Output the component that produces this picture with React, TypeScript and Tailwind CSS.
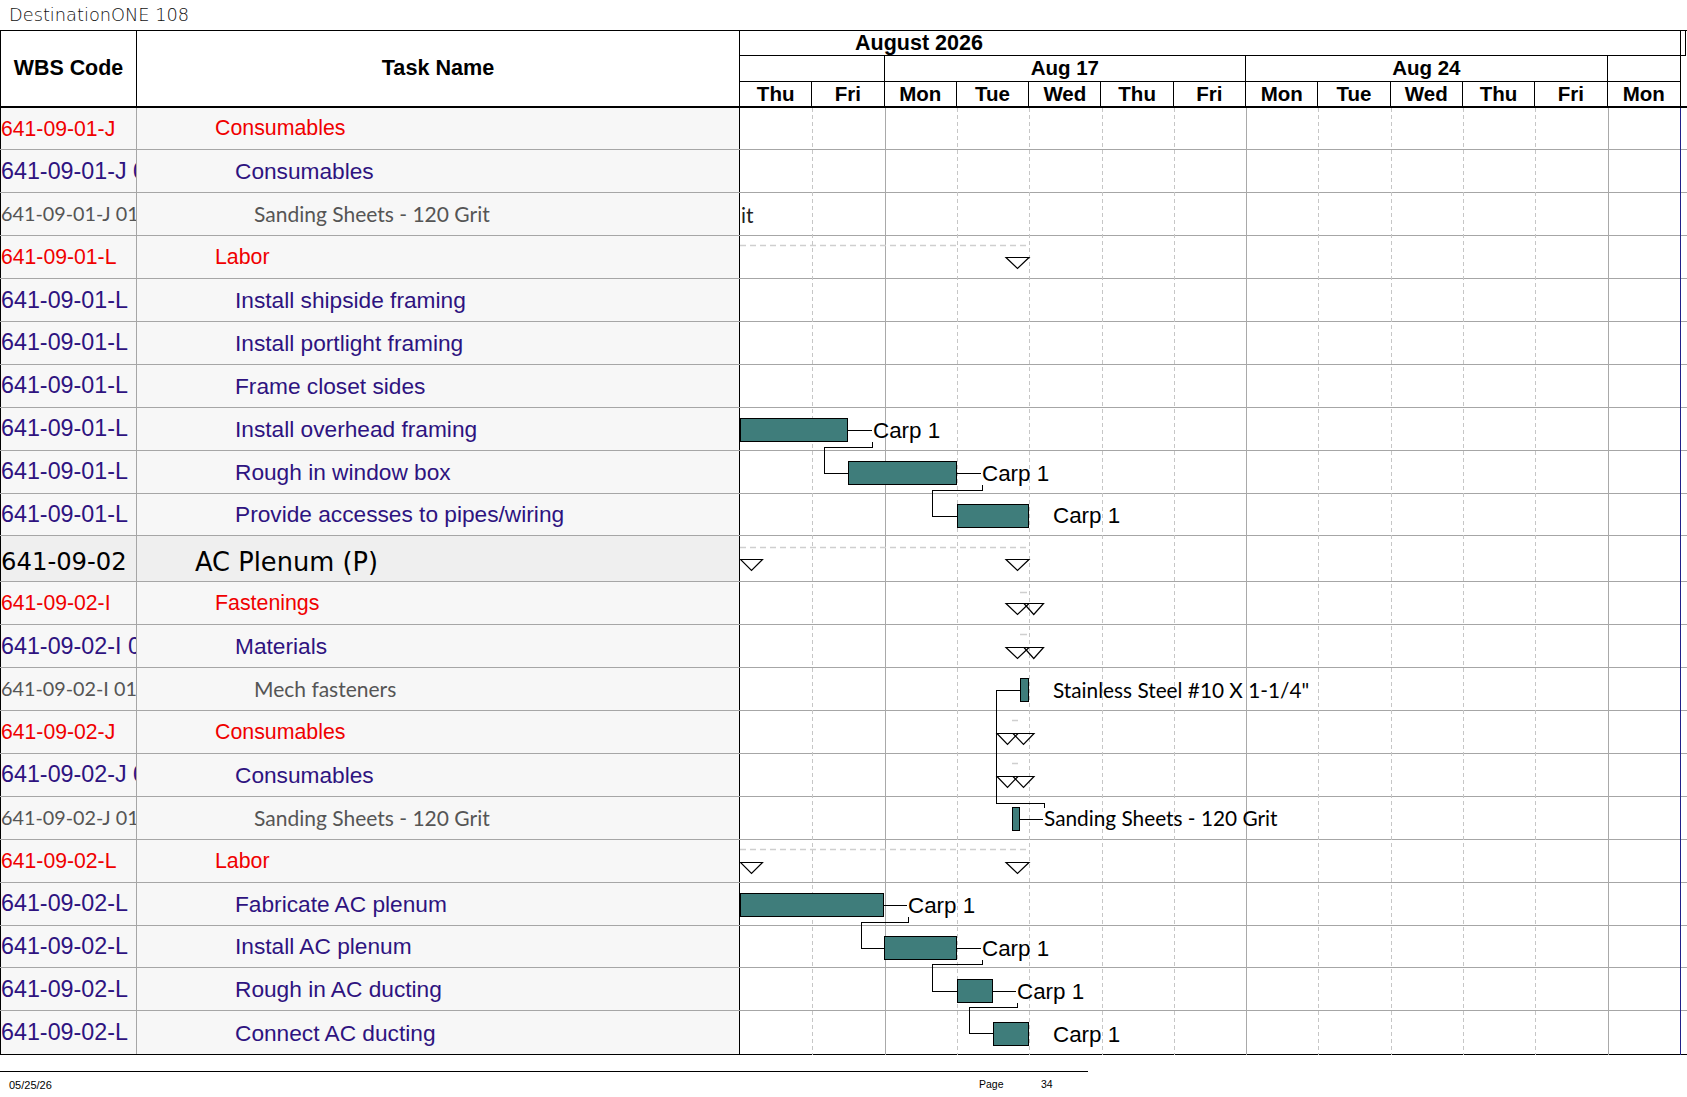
import clsx from 'clsx'

const cn = clsx

type Kind = 'red' | 'purple' | 'grey' | 'sum'

type Row = { code: string; name: string; kind: Kind }

const ROWS: Row[] = [
  { code: '641-09-01-J', name: 'Consumables', kind: 'red' },
  { code: '641-09-01-J 01', name: 'Consumables', kind: 'purple' },
  { code: '641-09-01-J 01 01', name: 'Sanding Sheets - 120 Grit', kind: 'grey' },
  { code: '641-09-01-L', name: 'Labor', kind: 'red' },
  { code: '641-09-01-L', name: 'Install shipside framing', kind: 'purple' },
  { code: '641-09-01-L', name: 'Install portlight framing', kind: 'purple' },
  { code: '641-09-01-L', name: 'Frame closet sides', kind: 'purple' },
  { code: '641-09-01-L', name: 'Install overhead framing', kind: 'purple' },
  { code: '641-09-01-L', name: 'Rough in window box', kind: 'purple' },
  { code: '641-09-01-L', name: 'Provide accesses to pipes/wiring', kind: 'purple' },
  { code: '641-09-02', name: 'AC Plenum (P)', kind: 'sum' },
  { code: '641-09-02-I', name: 'Fastenings', kind: 'red' },
  { code: '641-09-02-I 01', name: 'Materials', kind: 'purple' },
  { code: '641-09-02-I 01 01', name: 'Mech fasteners', kind: 'grey' },
  { code: '641-09-02-J', name: 'Consumables', kind: 'red' },
  { code: '641-09-02-J 01', name: 'Consumables', kind: 'purple' },
  { code: '641-09-02-J 01 01', name: 'Sanding Sheets - 120 Grit', kind: 'grey' },
  { code: '641-09-02-L', name: 'Labor', kind: 'red' },
  { code: '641-09-02-L', name: 'Fabricate AC plenum', kind: 'purple' },
  { code: '641-09-02-L', name: 'Install AC plenum', kind: 'purple' },
  { code: '641-09-02-L', name: 'Rough in AC ducting', kind: 'purple' },
  { code: '641-09-02-L', name: 'Connect AC ducting', kind: 'purple' },
]

const ARIAL = "font-['Liberation_Sans',Arial,sans-serif]"

const KIND_CODE: Record<Kind, string> = {
  red: `text-[#f00000] text-[21.2px] ${ARIAL}`,
  purple: `text-[#2e1380] text-[23.3px] ${ARIAL}`,
  grey: "text-[#555555] text-[19.8px] font-['Lato',sans-serif]",
  sum: "text-black text-[24.3px] pt-[7px] font-['DejaVu_Sans',sans-serif]",
}

const KIND_NAME: Record<Kind, string> = {
  red: `text-[#f00000] text-[21.35px] pl-[78px] ${ARIAL}`,
  purple: `text-[#2e1380] text-[22.7px] pl-[98px] ${ARIAL}`,
  grey: "text-[#555555] text-[21px] pl-[117px] font-['Lato',sans-serif]",
  sum: "text-black text-[25.7px] pl-[58px] pt-[7px] font-['DejaVu_Sans',sans-serif]",
}

const DAYS = ['Thu', 'Fri', 'Mon', 'Tue', 'Wed', 'Thu', 'Fri', 'Mon', 'Tue', 'Wed', 'Thu', 'Fri', 'Mon']
const DAY = 72.3
const X0 = 740

// bars in page coordinates
const BARS = [
  { x1: 740, x2: 848, y: 417.5 },
  { x1: 848, x2: 957, y: 460.5 },
  { x1: 957, x2: 1029, y: 503.5 },
  { x1: 740, x2: 884, y: 892.5 },
  { x1: 884, x2: 957, y: 935.5 },
  { x1: 957, x2: 993, y: 978.5 },
  { x1: 993, x2: 1029, y: 1021.5 },
]

const CARP = [
  { x: 873, cy: 429, lead: [848, 872] },
  { x: 982, cy: 472, lead: [957, 981] },
  { x: 1053, cy: 514.5, lead: null },
  { x: 908, cy: 904, lead: [884, 907] },
  { x: 982, cy: 947, lead: [957, 981] },
  { x: 1017, cy: 990, lead: [993, 1016] },
  { x: 1053, cy: 1033, lead: null },
]

const LINKS = [
  '872.5,441 872.5,446.5 824.5,446.5 824.5,472.5 848,472.5',
  '982.5,484 982.5,489.5 932.5,489.5 932.5,515.5 957,515.5',
  '908.5,916 908.5,921.5 861.5,921.5 861.5,947.5 884,947.5',
  '982.5,959 982.5,963.5 932.5,963.5 932.5,990.5 957,990.5',
  '1017.5,1002 1017.5,1006.5 969.5,1006.5 969.5,1032.5 993,1032.5',
  '1020,689.5 996.5,689.5 996.5,802.5 1044.5,802.5 1044.5,807',
]

function tri(x: number, y: number, w: number, h = 11) {
  return `${x},${y} ${x + w},${y} ${x + w / 2},${y + h}`
}

function Chart() {
  const lines = Array.from({ length: 12 }, (_, i) => i + 1)
  return (
    <svg
      className="absolute left-[740px] top-0"
      width={947}
      height={947}
      viewBox="740 107.5 947 947"
    >
      {lines.map(k => {
        const x = Math.round(X0 + DAY * k) + 0.5
        const solid = k === 2 || k === 7 || k === 12
        return (
          <line
            key={k}
            x1={x}
            x2={x}
            y1={107}
            y2={1055}
            stroke={solid ? '#a9a9a9' : '#c6c6c6'}
            strokeDasharray={solid ? undefined : '4 3'}
            shapeRendering="crispEdges"
          />
        )
      })}
      <line x1={1680.5} x2={1680.5} y1={107} y2={1055} stroke="#20208a" shapeRendering="crispEdges" />

      <text x={741} y={222} fontFamily="Lato, sans-serif" fontSize={20.8} fill="#222">
        it
      </text>

      {/* summary rows */}
      {[245, 547, 849].map(y => (
        <line key={y} x1={740} x2={1029} y1={y} y2={y} stroke="#cfcfcf" strokeWidth={1.5} strokeDasharray="6 4" />
      ))}
      <g fill="white" stroke="black" strokeWidth={1.2}>
        <polygon points={tri(1006, 257, 23)} />
        <polygon points={tri(740.5, 559, 22)} />
        <polygon points={tri(1006, 559, 23)} />
        <polygon points={tri(740.5, 862, 22)} />
        <polygon points={tri(1006, 862, 23)} />
      </g>
      <g fill="none" stroke="black" strokeWidth={1.2}>
        {[603, 647].map(y => (
          <g key={y}>
            <polygon points={tri(1006, y, 23)} />
            <polygon points={tri(1024, y, 19.5)} />
          </g>
        ))}
        {[733, 776].map(y => (
          <g key={y}>
            <polygon points={tri(997, y, 21)} />
            <polygon points={tri(1013, y, 21)} />
          </g>
        ))}
      </g>
      {[
        [1020, 1027, 592],
        [1020, 1027, 634],
        [1012, 1018, 720],
        [1012, 1018, 763],
      ].map(([a, b, y]) => (
        <line key={y} x1={a} x2={b} y1={y} y2={y} stroke="#cfcfcf" strokeWidth={1.5} />
      ))}

      {/* links */}
      <g fill="none" stroke="black" strokeWidth={1} shapeRendering="crispEdges">
        {LINKS.map(p => (
          <polyline key={p} points={p} />
        ))}
        {CARP.filter(c => c.lead).map(c => (
          <line key={c.cy} x1={c.lead![0]} x2={c.lead![1]} y1={Math.round(c.cy) + 0.5} y2={Math.round(c.cy) + 0.5} />
        ))}
        <line x1={1019} x2={1043} y1={818.5} y2={818.5} />
      </g>

      {/* bars */}
      <g fill="#3f7d7b" stroke="black" strokeWidth={1} shapeRendering="crispEdges">
        {BARS.map(b => (
          <rect key={b.y} x={b.x1 + 0.5} y={b.y} width={b.x2 - b.x1 - 1} height={23} />
        ))}
        <rect x={1020.5} y={677.5} width={8} height={23} />
        <rect x={1012.5} y={806.5} width={7} height={23} />
      </g>

      <g fontFamily="'Liberation Sans', Arial, sans-serif" fontSize={22.4} fill="black">
        {CARP.map(c => (
          <text key={c.cy} x={c.x} y={c.cy + 8}>
            Carp 1
          </text>
        ))}
      </g>
      <g fontFamily="Lato, sans-serif" fontSize={20.8} fill="black">
        <text x={1053} y={697.5}>Stainless Steel #10 X 1-1/4"</text>
        <text x={1044} y={825.5}>Sanding Sheets - 120 Grit</text>
      </g>
    </svg>
  )
}

function Header() {
  return (
    <div className={cn('flex h-[77.5px] w-[1687px] border-t border-b-2 border-black', ARIAL)}>
      <div className="flex w-[137px] shrink-0 items-center justify-center border-x border-black text-[21.4px] font-bold leading-none text-black">
        WBS Code
      </div>
      <div className="flex w-[603px] shrink-0 items-center justify-center border-r border-black text-[21.6px] font-bold leading-none text-black">
        Task Name
      </div>
      <div className="flex flex-1 flex-col text-[20.5px] font-bold leading-none text-black">
        <div className="flex h-[25px] w-[946px] border-b border-black">
          <div className="flex w-[941px] items-center border-r border-black pl-[115px] pt-[2px] text-[21.5px]">August 2026</div>
          <div className="w-[5px] border-r border-black" />
        </div>
        <div className="grid h-[26px] w-[941px] grid-cols-[144.6px_361.5px_361.5px_1fr] border-b border-black">
          <div className="border-r border-black" />
          <div className="flex items-center justify-center border-r border-black">Aug 17</div>
          <div className="flex items-center justify-center border-r border-black">Aug 24</div>
          <div className="border-r border-black" />
        </div>
        <div className="grid w-[941px] flex-1 grid-cols-[repeat(12,72.3px)_1fr]">
          {DAYS.map((d, i) => (
            <div key={i} className="flex items-center justify-center border-r border-black">
              {d}
            </div>
          ))}
        </div>
      </div>
    </div>
  )
}

export default function App() {
  return (
    <div className="h-[1097px] w-[1687px] overflow-hidden bg-white">
      <div className="flex h-[30px] items-center pl-[9px] font-['DejaVu_Sans',sans-serif] text-[17.8px] font-extralight text-[#111]">
        DestinationONE 108
      </div>
      <Header />
      <div className="relative w-[1687px] border-b border-black">
        {ROWS.map((r, i) => {
          const last = i === ROWS.length - 1
          const sum = r.kind === 'sum'
          return (
            <div
              key={i}
              className={cn(
                'flex',
                sum ? 'h-[46px]' : 'h-[42.9px]',
                !last && 'border-b border-[#a6a6a6]',
              )}
            >
              <div
                className={cn(
                  'flex w-[137px] shrink-0 items-center overflow-hidden whitespace-nowrap border-l border-r border-l-black border-r-[#a6a6a6]',
                  sum ? 'bg-[#efefef]' : 'bg-[#f7f7f7]',
                  KIND_CODE[r.kind],
                )}
              >
                {r.code}
              </div>
              <div
                className={cn(
                  'flex w-[603px] shrink-0 items-center overflow-hidden whitespace-nowrap border-r border-black',
                  sum ? 'bg-[#efefef]' : 'bg-[#f7f7f7]',
                  KIND_NAME[r.kind],
                )}
              >
                {r.name}
              </div>
              <div className="flex-1 bg-white" />
            </div>
          )
        })}
        <Chart />
      </div>
      <div className="mt-[16px] h-px w-[1088px] bg-black" />
      <div className={cn('flex h-[26px] items-center text-[10.5px] text-black', ARIAL)}>
        <div className="w-[979px] pl-[9px] text-[11px]">05/25/26</div>
        <div className="w-[62px]">Page</div>
        <div>34</div>
      </div>
    </div>
  )
}
